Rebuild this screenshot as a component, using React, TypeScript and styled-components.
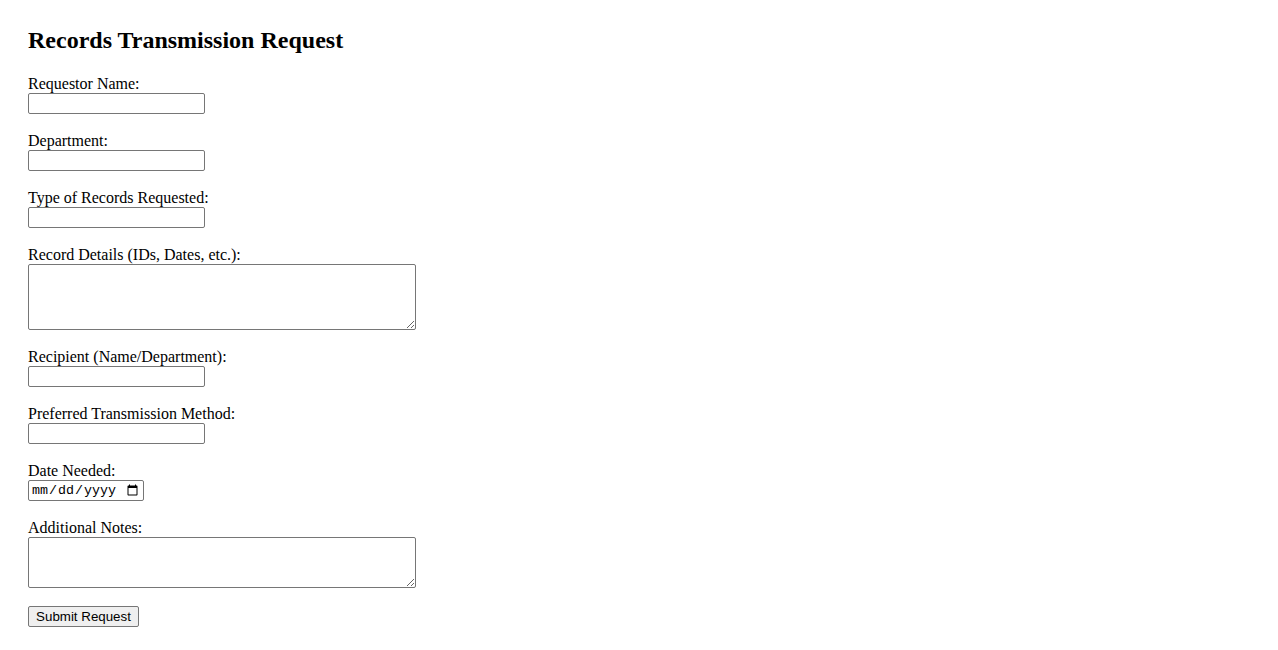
import React from "react";
import styled, { createGlobalStyle } from "styled-components";

const GlobalStyle = createGlobalStyle`
  html, body {
    margin: 0;
    padding: 0;
    background: #ffffff;
  }
  body {
    font-family: "Liberation Serif", "Times New Roman", serif;
    font-size: 16px;
    color: #000000;
  }
`;

const Page = styled.div`
  padding: 26px 28px 20px 28px;
`;

const Title = styled.h2`
  margin: 0 0 21px 0;
  font-family: "Liberation Serif", "Times New Roman", serif;
  font-size: 24px;
  font-weight: bold;
  line-height: 28px;
`;

const Form = styled.form`
  display: flex;
  flex-direction: column;
  align-items: flex-start;
`;

const Field = styled.div`
  display: flex;
  flex-direction: column;
  align-items: flex-start;
  margin-bottom: 18px;
`;

const Label = styled.label`
  display: block;
  font-size: 16px;
  line-height: 18px;
  height: 18px;
`;

const TextInput = styled.input`
  box-sizing: border-box;
  width: 177px;
  height: 21px;
  margin: 0;
  padding: 1px 2px;
  border: 1px solid #767676;
  border-radius: 2px;
  background: #ffffff;
  font-family: "Liberation Sans", Arial, sans-serif;
  font-size: 13.33px;
`;

const DateInput = styled.input`
  box-sizing: border-box;
  width: 116px;
  height: 21px;
  margin: 0;
  padding: 1px 2px;
  border: 1px solid #767676;
  border-radius: 2px;
  background: #ffffff;
  font-family: "Liberation Mono", "DejaVu Sans Mono", monospace;
  font-size: 13.33px;
`;

const TextArea = styled.textarea<{ $h: number }>`
  box-sizing: border-box;
  width: 388px;
  height: ${(p) => p.$h}px;
  margin: 0;
  padding: 2px;
  border: 1px solid #767676;
  border-radius: 2px;
  background: #ffffff;
  font-family: "Liberation Mono", monospace;
  font-size: 13.33px;
`;

const SubmitButton = styled.button`
  box-sizing: border-box;
  width: 111px;
  height: 21px;
  margin: 0;
  padding: 1px 6px;
  border: 1px solid #767676;
  border-radius: 2px;
  background: #efefef;
  color: #000000;
  font-family: "Liberation Sans", Arial, sans-serif;
  font-size: 13.33px;
  line-height: 16px;
`;

const textFields = [
  { id: "requestor", label: "Requestor Name:" },
  { id: "department", label: "Department:" },
  { id: "recordType", label: "Type of Records Requested:" },
];

export default function App() {
  return (
    <>
      <GlobalStyle />
      <Page>
        <Title>Records Transmission Request</Title>
        <Form onSubmit={(e) => e.preventDefault()}>
          {textFields.map((f) => (
            <Field key={f.id}>
              <Label htmlFor={f.id}>{f.label}</Label>
              <TextInput id={f.id} type="text" />
            </Field>
          ))}
          <Field>
            <Label htmlFor="details">Record Details (IDs, Dates, etc.):</Label>
            <TextArea id="details" $h={66} />
          </Field>
          <Field>
            <Label htmlFor="recipient">Recipient (Name/Department):</Label>
            <TextInput id="recipient" type="text" />
          </Field>
          <Field>
            <Label htmlFor="method">Preferred Transmission Method:</Label>
            <TextInput id="method" type="text" />
          </Field>
          <Field>
            <Label htmlFor="date">Date Needed:</Label>
            <DateInput id="date" type="date" />
          </Field>
          <Field>
            <Label htmlFor="notes">Additional Notes:</Label>
            <TextArea id="notes" $h={51} />
          </Field>
          <SubmitButton type="submit">Submit Request</SubmitButton>
        </Form>
      </Page>
    </>
  );
}
